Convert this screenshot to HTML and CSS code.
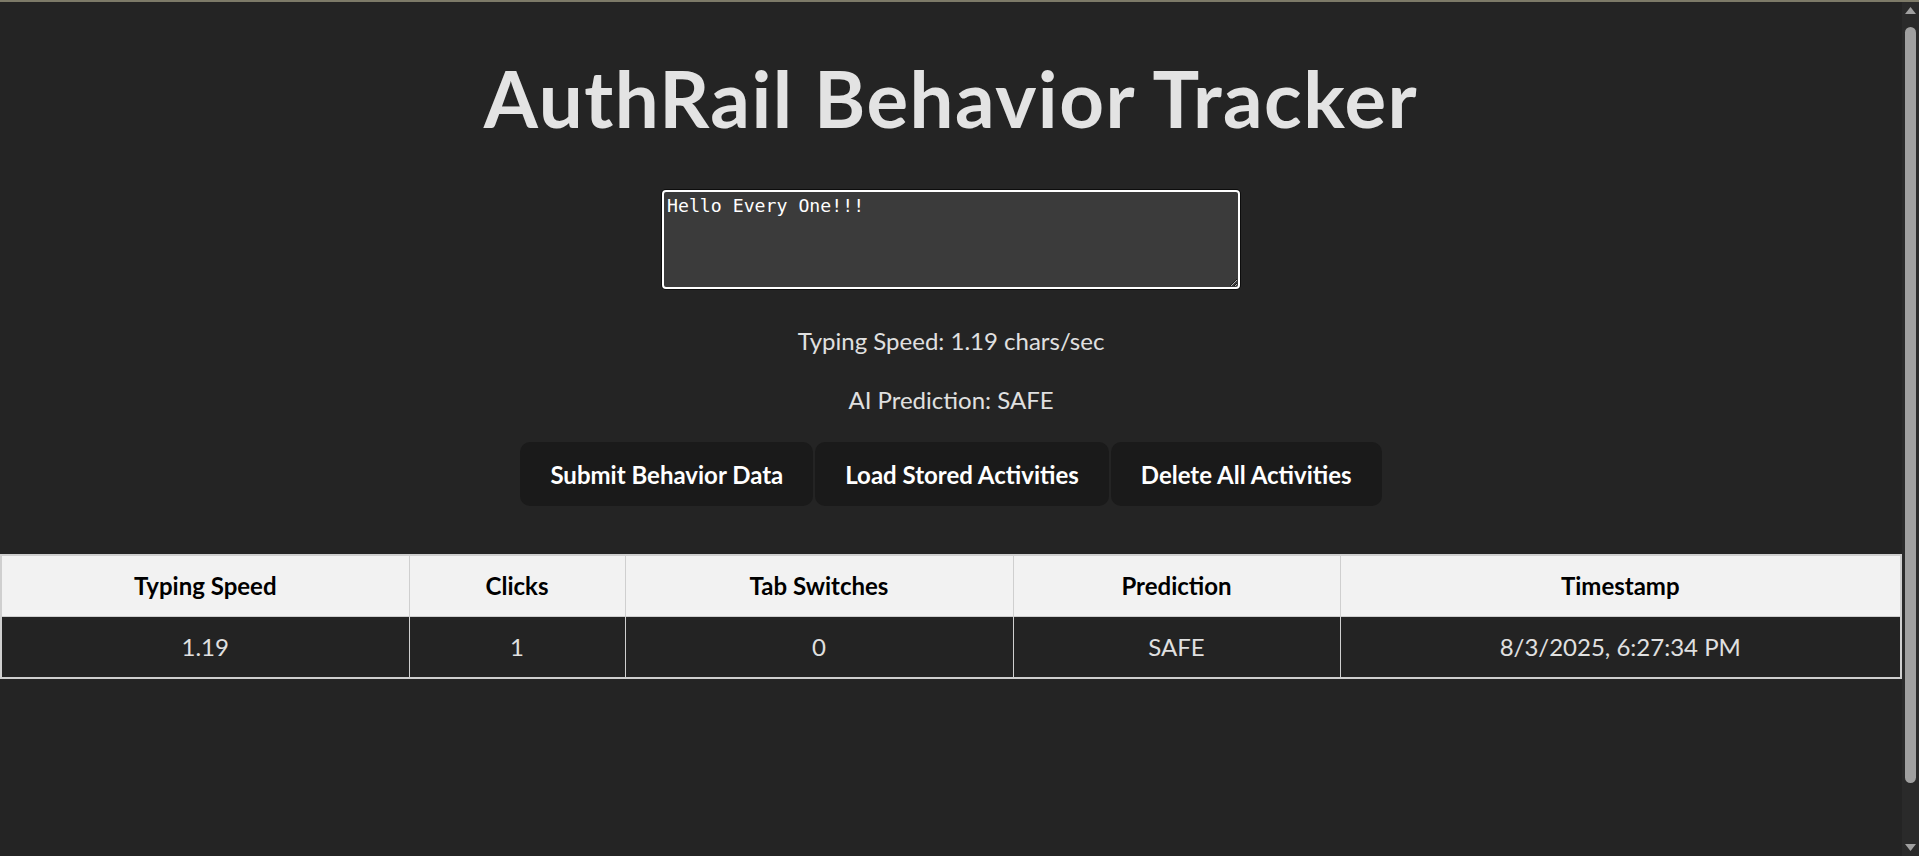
FILE: index.html
```html
<!DOCTYPE html>
<html lang="en">
<head>
<meta charset="utf-8">
<title>AuthRail Behavior Tracker</title>
<link rel="stylesheet" href="styles.css">
</head>
<body>
<main class="page">
  <h1 class="title">AuthRail Behavior Tracker</h1>
  <textarea class="input" spellcheck="false">Hello Every One!!!</textarea>
  <p class="stat stat-speed">Typing Speed: 1.19 chars/sec</p>
  <p class="stat stat-pred">AI Prediction: SAFE</p>
  <div class="actions">
    <button class="btn">Submit Behavior Data</button>
    <button class="btn">Load Stored Activities</button>
    <button class="btn">Delete All Activities</button>
  </div>
  <table class="grid">
    <colgroup>
      <col class="c1"><col class="c2"><col class="c3"><col class="c4"><col class="c5">
    </colgroup>
    <thead>
      <tr><th>Typing Speed</th><th>Clicks</th><th>Tab Switches</th><th>Prediction</th><th>Timestamp</th></tr>
    </thead>
    <tbody>
      <tr><td>1.19</td><td>1</td><td>0</td><td>SAFE</td><td>8/3/2025, 6:27:34 PM</td></tr>
    </tbody>
  </table>
</main>
<div class="scrollbar" aria-hidden="true">
  <div class="sb-btn">
    <svg width="17" height="17" viewBox="0 0 17 17"><polygon points="3,12 8.5,5 14,12" fill="#a0a0a0"/></svg>
  </div>
  <div class="sb-track"><div class="sb-thumb"></div></div>
  <div class="sb-btn">
    <svg width="17" height="17" viewBox="0 0 17 17"><polygon points="3,5 8.5,12 14,5" fill="#a0a0a0"/></svg>
  </div>
</div>
</body>
</html>
```
FILE: styles.css
```css
html {
  background: #242424;
}
body {
  box-sizing: border-box;
  display: flex;
  height: 856px;
  margin: 0;
  overflow: hidden;
  border-top: 2px solid #7d7a68;
  background: #242424;
  color: #e0e0e0;
  font-family: Lato, "Open Sans", Arial, sans-serif;
}
.page {
  flex: 1;
  min-width: 0;
  display: flex;
  flex-direction: column;
  align-items: center;
  padding-top: 50px;
}
.scrollbar {
  width: 17px;
  flex: none;
  display: flex;
  flex-direction: column;
  background: #2a2a2a;
}
.sb-btn {
  height: 17px;
  flex: none;
}
.sb-btn svg {
  display: block;
}
.sb-track {
  flex: 1;
  padding: 8px 3px 56px;
}
.sb-thumb {
  height: 100%;
  border-radius: 6px;
  background: #a0a0a0;
}
.title {
  margin: 0;
  font-size: 78px;
  line-height: 92px;
  letter-spacing: 1.5px;
  font-weight: 700;
  color: #e3e3e3;
}
.input {
  box-sizing: border-box;
  width: 578px;
  height: 99px;
  margin-top: 46px;
  padding: 3px 3px;
  background: #3b3b3b;
  color: #ffffff;
  border: 2px solid #ffffff;
  border-radius: 4px;
  box-shadow: 0 0 0 1px #0c0c0c;
  font-family: "DejaVu Sans Mono", "Liberation Mono", monospace;
  font-size: 18.2px;
  line-height: 22px;
  outline: none;
}
.stat {
  margin: 0;
  font-size: 24px;
  line-height: 29px;
  color: #e0e0e0;
}
.stat-speed {
  margin-top: 37px;
}
.stat-pred {
  margin-top: 30px;
}
.actions {
  display: flex;
  gap: 2px;
  margin-top: 28px;
}
.btn {
  height: 64px;
  padding: 0 30px;
  border: none;
  border-radius: 10px;
  background: #1a1a1a;
  color: #ffffff;
  font-family: inherit;
  font-size: 24px;
  font-weight: 700;
}
.grid {
  width: 100%;
  margin-top: 48px;
  table-layout: fixed;
  border-collapse: collapse;
  border: 2px solid #cfcfcf;
  font-size: 24px;
}
.c1 { width: 408px; }
.c2 { width: 216px; }
.c3 { width: 388px; }
.c4 { width: 327px; }
.grid th,
.grid td {
  padding: 15px 10px;
  line-height: 30px;
  border: 1px solid #cfcfcf;
  text-align: center;
}
.grid th {
  background: #f2f2f2;
  color: #000000;
  font-weight: 700;
}
.grid td {
  background: #232323;
  color: #e0e0e0;
}
```
